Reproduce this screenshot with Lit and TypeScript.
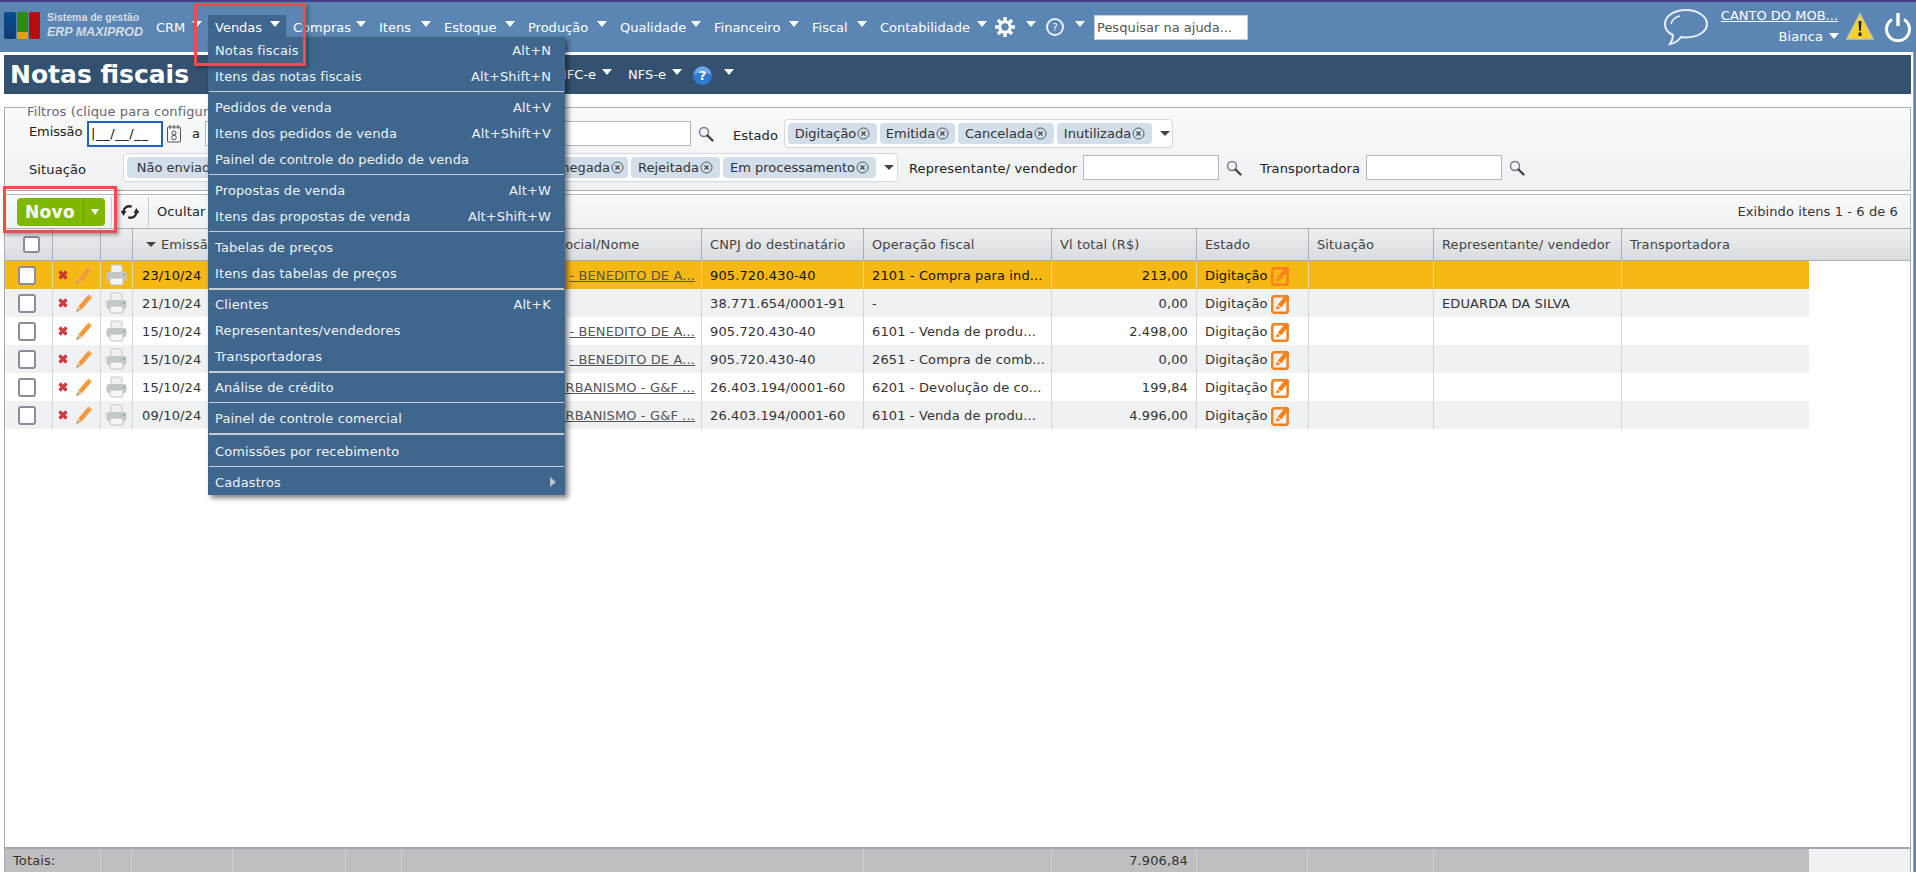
import { LitElement, html, css } from "lit";
import { customElement } from "lit/decorators.js";

const NAV: [string, number][] = [
  ["CRM", 59], ["Vendas", 78], ["Compras", 86], ["Itens", 65], ["Estoque", 84], ["Produção", 92],
  ["Qualidade", 94], ["Financeiro", 98], ["Fiscal", 68], ["Contabilidade", 120],
];

type MI = [string, string?];
const MENU: { items: MI[]; sep: string }[] = [
  { items: [["Notas fiscais", "Alt+N"], ["Itens das notas fiscais", "Alt+Shift+N"]], sep: "thin" },
  { items: [["Pedidos de venda", "Alt+V"], ["Itens dos pedidos de venda", "Alt+Shift+V"], ["Painel de controle do pedido de venda"]], sep: "thin" },
  { items: [["Propostas de venda", "Alt+W"], ["Itens das propostas de venda", "Alt+Shift+W"]], sep: "thin" },
  { items: [["Tabelas de preços"], ["Itens das tabelas de preços"]], sep: "thick" },
  { items: [["Clientes", "Alt+K"], ["Representantes/vendedores"], ["Transportadoras"]], sep: "thick" },
  { items: [["Análise de crédito"]], sep: "thin" },
  { items: [["Painel de controle comercial"]], sep: "thick wide" },
  { items: [["Comissões por recebimento"]], sep: "thin" },
];

const ROWS = [
  ["23/10/24", "- BENEDITO DE A...", "905.720.430-40", "2101 - Compra para ind...", "213,00", ""],
  ["21/10/24", "", "38.771.654/0001-91", "-", "0,00", "EDUARDA DA SILVA"],
  ["15/10/24", "- BENEDITO DE A...", "905.720.430-40", "6101 - Venda de produ...", "2.498,00", ""],
  ["15/10/24", "- BENEDITO DE A...", "905.720.430-40", "2651 - Compra de comb...", "0,00", ""],
  ["15/10/24", "URBANISMO - G&F ...", "26.403.194/0001-60", "6201 - Devolução de co...", "199,84", ""],
  ["09/10/24", "URBANISMO - G&F ...", "26.403.194/0001-60", "6101 - Venda de produ...", "4.996,00", ""],
];

const searchIcon = html`<svg class="search" width="16" height="16" viewBox="0 0 16 16"><circle cx="6" cy="6" r="4.5" fill="#eef2f5" stroke="#778" stroke-width="1.4"/><path d="M9.5 9.5 14.5 14.5" stroke="#444" stroke-width="2.4" stroke-linecap="round"/></svg>`;
const xIcon = html`<svg width="10" height="10" viewBox="0 0 10 10"><path d="M1.5 1.5 8.5 8.5M8.5 1.5 1.5 8.5" stroke="#c4282e" stroke-width="3.2" stroke-opacity=".9"/></svg>`;
const pencilIcon = html`<svg width="18" height="20" viewBox="0 0 18 20"><path d="M15.200 3 5 15" stroke="#ee9a3a" stroke-width="4.6"/><path d="M14.200 1.800 17 4.200 16 5.400 13 3Z" fill="#f6b870"/><path d="M1.500 18.800 2.600 14 6.600 17Z" fill="#d2ab7c"/><path d="M1.500 18.800 1.900 17.200 3 18.200Z" fill="#555"/></svg>`;
const printerIcon = html`<svg width="21" height="22" viewBox="0 0 21 22"><rect x="5" y="1" width="11" height="8" rx="1.500" fill="#eef0f1" stroke="#c6c9cc"/><rect x="0.500" y="8" width="20" height="9" rx="2.500" fill="#c3c7ca"/><rect x="4" y="14" width="13" height="7" rx="1.500" fill="#f4f5f6" stroke="#bcc0c3"/><rect x="17" y="10" width="2" height="2" fill="#7dbb7d"/></svg>`;
const editIcon = html`<svg width="20" height="21" viewBox="0 0 19 20"><rect x="1.200" y="3.200" width="14.600" height="15.600" rx="2" fill="none" stroke="#f8811c" stroke-width="2.400"/><path d="M16 2.500 8 12.500" stroke="#f8811c" stroke-width="4.200"/><path d="M4.800 16 5.600 11.800 9 14.400Z" fill="#f8811c"/></svg>`;
const chipX = html`<svg class="chipx" width="13" height="13" viewBox="0 0 13 13"><circle cx="6.5" cy="6.5" r="5.5" fill="none" stroke="#555" stroke-width="1"/><path d="M4.5 4.5 8.5 8.5M8.5 4.5 4.5 8.5" stroke="#444" stroke-width="1.2"/></svg>`;

@customElement("app-root")
export class AppRoot extends LitElement {
  static styles = css`
    :host { display: block; position: relative; width: 1916px; height: 872px; overflow: hidden; background: #5b86b3;
      font-family: "DejaVu Sans", sans-serif; font-size: 13px; letter-spacing: .12px; color: #333; }
    * { box-sizing: border-box; }
    .top { height: 52px; background: #5b86b3; border-top: 2px solid #46408c; display: flex; align-items: center; color: #fff; }
    .brand { width: 149px; display: flex; }
    .logo { display: flex; padding-left: 4px; align-items: stretch; height: 27px; gap: 1px; margin-top: -3px; }
    .lb { width: 12px; border-radius: 2px; background: linear-gradient(#0a4d94, #0f3a6e); }
    .lg { width: 11px; display: flex; flex-direction: column; }
    .lg i { display: block; flex: 1; background: #2f8a12; border-radius: 2px 2px 0 0; }
    .lg b { display: block; height: 7px; background: #e0a010; }
    .lr { width: 11px; border-radius: 2px; background: #b80d10; }
    .logotext { display: flex; flex-direction: column; margin: -2px 0 0 6px; color: #d3dde8; font-weight: bold; white-space: nowrap; width: 0; letter-spacing: 0; font-family: "Liberation Sans", sans-serif; }
    .logotext span { font-size: 10.5px; line-height: 14px; }
    .logotext em { font-size: 12.500px; line-height: 16px; }
    .nav { height: 25px; display: flex; justify-content: space-between; align-items: center; padding: 0 6px 0 7px; white-space: nowrap; color: #fff; letter-spacing: 0; }
    .nav.on { background: #3f668d; }
    .caret { display: block; width: 0; height: 0; border-left: 5.5px solid transparent; border-right: 5.5px solid transparent; border-top: 6px solid #fff; margin-top: -6px; flex: none; }
    .gear { margin-left: 2px; }
    .ic { display: flex; align-items: center; gap: 11px; }
    .helpc { width: 18px; height: 18px; border: 2px solid #e9eff5; border-radius: 50%; display: flex; align-items: center; justify-content: center; font-size: 11px; color: #e9eff5; margin-left: 10px; letter-spacing: 0; }
    .cgap { margin-left: 11px; }
    .hs { width: 154px; height: 25px; background: #fff; border: 1px solid #ccc; color: #555; padding: 3px 2px; margin-left: 9px; white-space: nowrap; line-height: 17px; letter-spacing: 0; }
    .right { margin-left: auto; display: flex; align-items: center; padding-right: 4px; }
    .acct { display: flex; flex-direction: column; align-items: flex-end; margin-left: 9px; width: 122px; }
    .acct u { line-height: 17px; margin: -3px 2px 0 0; letter-spacing: 0; }
    .acct span { display: flex; align-items: center; gap: 6px; margin-top: 5px; line-height: 16px; }
    .acct .caret { margin-top: -2px; margin-right: 1px; }
    .warn { margin: 0 9px 0 5px; }

    .page { height: 820px; width: 1914px; padding: 3px 2px 0 3px; display: flex; flex-direction: column; background: #fff; border-right: 1px solid #9a9ea6; }
    .title { height: 39px; margin: 0 0 13px 1px; background: #34526f; color: #fff; display: flex; align-items: center; padding-left: 6px; white-space: nowrap; }
    .title h1 { margin: 0; font-size: 25px; font-weight: bold; width: 547px; letter-spacing: 0; }
    .tab { display: flex; align-items: center; gap: 6px; color: #fff; letter-spacing: 0; }
    .tab.a { width: 71px; }
    .tab.b { width: 65px; }
    .qwrap { position: relative; width: 19px; height: 19px; margin-top: 2px; }
    .qwrap span { position: absolute; left: 0; right: 0; top: 1px; text-align: center; color: #fff; font-weight: bold; font-size: 13px; line-height: 17px; }
    .lastc { margin-left: 12px; }

    .filters { height: 84px; margin: 0 0 3px 1px; border: 1px solid #a9aeb4; background: linear-gradient(#f9fafa, #eef0f2); position: relative; padding: 0 0 0 24px; display: flex; flex-direction: column; }
    .legend { position: absolute; left: 21px; top: -4px; color: #667; padding: 0 1px; line-height: 15px; white-space: nowrap; background: linear-gradient(#fff, #f9fafa); }
    .fr { display: flex; align-items: center; white-space: nowrap; }
    .fr1 { height: 29px; margin-top: 11px; }
    .fr2 { height: 29px; margin-top: 5px; }
    .lbl { color: #222; flex: none; }
    .l-em { width: 58px; margin-top: -4px; letter-spacing: -.1px; }
    .l-a { width: 13px; }
    .l-es { width: 51px; margin-top: 4px; }
    .l-si { width: 94px; margin-top: 4px; }
    .l-re { width: 174px; margin: 2px 0 0 11px; }
    .l-tr { width: 100px; margin-top: 2px; }
    .date { width: 76px; height: 26px; border: 2px solid #1e62c8; background: #fff; padding-left: 2px; line-height: 22px; color: #111; letter-spacing: .6px; flex: none; }
    .cal { margin: 0 11px 0 4px; flex: none; }
    .inp { background: #fff; border: 1px solid #b4b8bc; height: 25px; flex: none; }
    .w-long { width: 486px; }
    .w-136 { width: 136px; margin-left: 6px; }
    .w-rep { width: 136px; }
    .sw { display: flex; margin: 0 0 0 7px; flex: none; }
    .sw.g19 { margin-right: 19px; }
    .sw.g18 { margin-right: 18px; }
    .chips { height: 29px; border: 1px solid #d4d8dc; border-radius: 4px; background: #fff; display: flex; align-items: center; padding-left: 3px; gap: 3px; flex: none; }
    .ch1 { width: 389px; }
    .ch2 { width: 775px; }
    .chip { height: 21px; background: #d2deea; border-radius: 4px; display: flex; align-items: center; justify-content: center; gap: 1px; color: #333; flex: none; letter-spacing: 0; overflow: hidden; }
    .chip.end { justify-content: flex-end; padding-right: 4px; }
    .dcaret { display: block; width: 0; height: 0; border-left: 5px solid transparent; border-right: 5px solid transparent; border-top: 5px solid #444; margin-left: 5px; flex: none; }
    .search { flex: none; }

    .toolbar { height: 34px; margin: 0 0 0 1px; border: 1px solid #b4b8bc; border-width: 1px 1px 0 1px; background: linear-gradient(#f8f9f9, #eff1f2); display: flex; align-items: center; white-space: nowrap; }
    .novo { width: 88px; height: 28px; margin-left: 12px; background: #7fb800; border-radius: 4px; display: flex; color: #fff; font-weight: bold; font-size: 17px; align-items: center; letter-spacing: .3px; }
    .novo span { width: 66px; text-align: center; }
    .novo i { width: 22px; height: 28px; border-left: 1px solid #6d9e00; display: flex; align-items: center; justify-content: center; }
    .novo i::before { content: ""; border-left: 4px solid transparent; border-right: 4px solid transparent; border-top: 6px solid #fff; }
    .vsep { width: 1px; height: 30px; background: #c8ccd0; flex: none; }
    .vsep.first { margin-left: 6px; }
    .refresh { margin: 0 9px; flex: none; }
    .count { margin-left: auto; margin-right: 12px; color: #333; letter-spacing: .1px; }
    .ocultar { margin-left: 8px; color: #222; }

    .grid { display: grid; grid-template-columns: 48px 48px 32px 100px 113px 56px 104px 196px 162px 188px 145px 112px 125px 188px 187px; width: 1804px; }
    .head { margin: 0 0 0 1px; height: 33px; border: 1px solid #a9aeb4; background: linear-gradient(#eceef0, #d9dcdf); width: auto; }
    .head .c { border-right: 1px solid #a9aeb4; height: 31px; display: flex; align-items: center; padding-left: 8px; white-space: nowrap; color: #444; overflow: hidden; }
    .head .c.np { padding: 0; }
    .head .c.em { padding-left: 13px; }
    .head .c.em .dcaret { margin: 0 5px 0 0; }
    .ck { width: 18px; height: 19px; background: #fff; border: 2px solid #8c8c9c; border-radius: 3px; flex: none; }
    .head .ck { margin-left: 18px; width: 17px; height: 17px; }
    .side { flex: 1; display: flex; flex-direction: column; border-left: 1px solid #a9aeb4; border-right: 1px solid #a9aeb4; margin: 0 0 0 1px; min-height: 0; }
    .r .c { height: 28px; border-right: 1px solid #d2d4d8; display: flex; align-items: center; padding: 0 8px; white-space: nowrap; overflow: hidden; color: #333; }
    .r:nth-child(even) { background: #f0f1f3; }
    .r.sel { background: #f5b815; }
    .r.sel .c { color: #111; border-right-color: #e8d9a0; }
    .c.cb { padding-left: 13px; }
    .c.ctr { justify-content: center; padding: 0; }
    .c.icons { gap: 7px; padding: 0 0 0 5px; }
    .c.dt { padding-left: 9px; }
    .num { justify-content: flex-end; }
    .c.name { padding-right: 6px; }
    .c.last { border: 0; }
    .c u { color: #555; }
    .r.sel .c u { color: #554; }
    .c.st { gap: 3px; padding: 0 0 0 8px; }
    .spacer { flex: 1; }
    .tot { height: 25px; background: #bfbfbf; display: grid; grid-template-columns: 96px 31px 101px 113px 56px 462px 188px 145px 111px 126px 375px 1fr; border-top: 2px solid #a3a5b3; }
    .tot div { border-right: 1px solid #d0d0d0; display: flex; align-items: center; padding: 0 8px; color: #333; white-space: nowrap; }
    .tot div:last-child { background: #f0f1f3; border: 0; }
    .tot div:nth-last-child(2) { border: 0; }

    .menu { position: absolute; left: 208px; top: 37px; width: 357px; height: 458px; background: #3f668d; color: #eef3f8; box-shadow: 3px 3px 5px rgba(0,0,0,.5); display: flex; flex-direction: column; }
    .mi { height: 26px; flex: none; display: flex; justify-content: space-between; align-items: center; padding: 0 14px 0 7px; white-space: nowrap; }
    .ms { flex: none; margin: 2px 1px; background: #c4ced8; }
    .ms.thin { height: 1px; }
    .ms.thick { height: 2px; margin-bottom: 1px; }
    .ms.wide { margin-bottom: 3px; }
    .arrow { display: block; width: 0; height: 0; border-top: 5.5px solid transparent; border-bottom: 5.5px solid transparent; border-left: 6px solid #b9c3cd; margin-right: -5px; }
    .redbox { position: absolute; border: 3px solid #f04b50; box-shadow: 2px 2px 4px rgba(0,0,0,.35); pointer-events: none; }
    .rb1 { left: 194px; top: 3px; width: 112px; height: 63px; }
    .rb2 { left: 3px; top: 186px; width: 114px; height: 47px; }
  `;

  private chip(t: string, w: number, cls = "") {
    return html`<span class="chip ${cls}" style="width:${w}px">${t}${chipX}</span>`;
  }

  render() {
    return html`
      <div class="top">
        <div class="brand">
          <div class="logo">
            <div class="lb"></div>
            <div class="lg"><i></i><b></b></div>
            <div class="lr"></div>
            <div class="logotext"><span>Sistema de gestão</span><em>ERP MAXIPROD</em></div>
          </div>
        </div>
        ${NAV.map(([n, w]) => html`<div class="nav ${n === "Vendas" ? "on" : ""}" style="width:${w}px">${n}<span class="caret"></span></div>`)}
        <div class="ic">
          <svg class="gear" width="20" height="20" viewBox="0 0 20 20"><g fill="none" stroke="#fff"><circle cx="10" cy="10" r="5.2" stroke-width="3"/><path stroke-width="3.4" d="M10 0v4M10 16v4M0 10h4M16 10h4M3 3l2.8 2.8M14.2 14.2 17 17M17 3l-2.8 2.8M5.8 14.2 3 17"/></g></svg>
          <span class="caret"></span>
        </div>
        <div class="helpc">?</div>
        <span class="caret cgap"></span>
        <div class="hs">Pesquisar na ajuda...</div>
        <div class="right">
          <svg width="46" height="38" viewBox="0 0 46 38"><path d="M23 2C11 2 2 8 2 16c0 5 3 9 8 11 0 3-1 6-3 9 5-1 9-4 11-7 2 .3 3 .4 5 .4 12 0 21-6 21-13.400S35 2 23 2Z" fill="none" stroke="#e8eef4" stroke-width="2"/><path d="M8 16c1-4 4-7 9-8" fill="none" stroke="#e8eef4" stroke-width="1.4"/></svg>
          <div class="acct"><u>CANTO DO MOB...</u><span>Bianca<i class="caret"></i></span></div>
          <svg class="warn" width="30" height="30" viewBox="0 0 30 30"><path d="M15 2 28 27H2Z" fill="#f6d323" stroke="#c9c6b0" stroke-width="1.500"/><path d="M13.500 9h3l-.6 10h-1.800Z" fill="#222"/><rect x="13.500" y="20.500" width="3" height="3.500" fill="#222"/></svg>
          <svg width="28" height="30" viewBox="0 0 28 30"><path d="M8 7.500a11.500 11.500 0 1 0 12 0" fill="none" stroke="#fff" stroke-width="3"/><path d="M14 1v13" stroke="#fff" stroke-width="3.400"/></svg>
        </div>
      </div>

      <div class="page">
        <div class="title">
          <h1>Notas fiscais</h1>
          <span class="tab a">NFC-e<i class="caret"></i></span>
          <span class="tab b">NFS-e<i class="caret"></i></span>
          <span class="qwrap"><svg width="19" height="19" viewBox="0 0 19 19"><circle cx="9.500" cy="9.500" r="9.500" fill="#2f79cf"/><path d="M1 9a8.500 8.500 0 0 1 17 0c-3-3-14-3-17 0Z" fill="#6ea8e6"/></svg><span>?</span></span>
          <i class="caret lastc"></i>
        </div>

        <div class="filters">
          <span class="legend">Filtros (clique para configurar)</span>
          <div class="fr fr1">
            <span class="lbl l-em">Emissão</span>
            <div class="date">|__/__/__</div>
            <svg class="cal" width="14" height="18" viewBox="0 0 14 18"><rect x="0.500" y="2" width="13" height="15" rx="1" fill="#f5f5f5" stroke="#555"/><path d="M3 0v4M7 0v4M11 0v4" stroke="#555"/><circle cx="7" cy="8" r="2" fill="none" stroke="#555"/><circle cx="7" cy="12.500" r="2.300" fill="none" stroke="#555"/></svg>
            <span class="lbl l-a">a</span>
            <div class="inp w-long"></div>
            <span class="sw g19">${searchIcon}</span>
            <span class="lbl l-es">Estado</span>
            <div class="chips ch1">
              ${this.chip("Digitação", 89)}${this.chip("Emitida", 75)}${this.chip("Cancelada", 96)}${this.chip("Inutilizada", 95)}<i class="dcaret"></i>
            </div>
          </div>
          <div class="fr fr2">
            <span class="lbl l-si">Situação</span>
            <div class="chips ch2">
              ${this.chip("Não enviada", 115)}
              ${this.chip("Denegada", 383, "end")}
              ${this.chip("Rejeitada", 89)}${this.chip("Em processamento", 153)}<i class="dcaret"></i>
            </div>
            <span class="lbl l-re">Representante/ vendedor</span>
            <div class="inp w-rep"></div>
            <span class="sw g18">${searchIcon}</span>
            <span class="lbl l-tr">Transportadora</span>
            <div class="inp w-136"></div>
            <span class="sw">${searchIcon}</span>
          </div>
        </div>

        <div class="toolbar">
          <div class="novo"><span>Novo</span><i></i></div>
          <div class="vsep first"></div>
          <svg class="refresh" width="18" height="16" viewBox="0 0 20 18"><g fill="none" stroke="#2a2a2a" stroke-width="2.600"><path d="M12 3C6.500 1.500 3 4 2.800 9"/><path d="M8 15c5.500 1.500 9-1 9.200-6"/></g><path d="M-.5 8h6.500L2.800 13.500ZM14 10h6.500L17.200 4.500Z" fill="#2a2a2a"/></svg>
          <div class="vsep"></div>
          <span class="ocultar">Ocultar filtros</span>
          <span class="count">Exibindo itens 1 - 6 de 6</span>
        </div>

        <div class="head grid">
          <div class="c np"><span class="ck"></span></div>
          <div class="c"></div><div class="c"></div>
          <div class="c em"><i class="dcaret"></i>Emissão</div>
          <div class="c"></div><div class="c"></div><div class="c"></div>
          <div class="c">Razão social/Nome</div>
          <div class="c">CNPJ do destinatário</div>
          <div class="c">Operação fiscal</div>
          <div class="c">Vl total (R$)</div>
          <div class="c">Estado</div>
          <div class="c">Situação</div>
          <div class="c">Representante/ vendedor</div>
          <div class="c last">Transportadora</div>
        </div>

        <div class="side">
          <div class="rows">
            ${ROWS.map((r, i) => html`
              <div class="r grid ${i === 0 ? "sel" : ""}">
                <div class="c cb"><span class="ck"></span></div>
                <div class="c icons">${xIcon}${pencilIcon}</div>
                <div class="c ctr">${printerIcon}</div>
                <div class="c dt">${r[0]}</div>
                <div class="c"></div><div class="c"></div><div class="c"></div>
                <div class="c num name"><u>${r[1]}</u></div>
                <div class="c">${r[2]}</div>
                <div class="c">${r[3]}</div>
                <div class="c num">${r[4]}</div>
                <div class="c st">Digitação${editIcon}</div>
                <div class="c"></div>
                <div class="c">${r[5]}</div>
                <div class="c last"></div>
              </div>`)}
          </div>
          <div class="spacer"></div>
          <div class="tot">
            <div>Totais:</div><div></div><div></div><div></div><div></div><div></div><div></div>
            <div class="num">7.906,84</div>
            <div></div><div></div><div></div><div></div>
          </div>
        </div>
      </div>

      <div class="menu">
        ${MENU.map((g) => html`
          ${g.items.map(([a, b]) => html`<div class="mi"><span>${a}</span><span>${b ?? ""}</span></div>`)}
          <div class="ms ${g.sep}"></div>`)}
        <div class="mi"><span>Cadastros</span><i class="arrow"></i></div>
      </div>
      <div class="redbox rb1"></div>
      <div class="redbox rb2"></div>
    `;
  }
}
